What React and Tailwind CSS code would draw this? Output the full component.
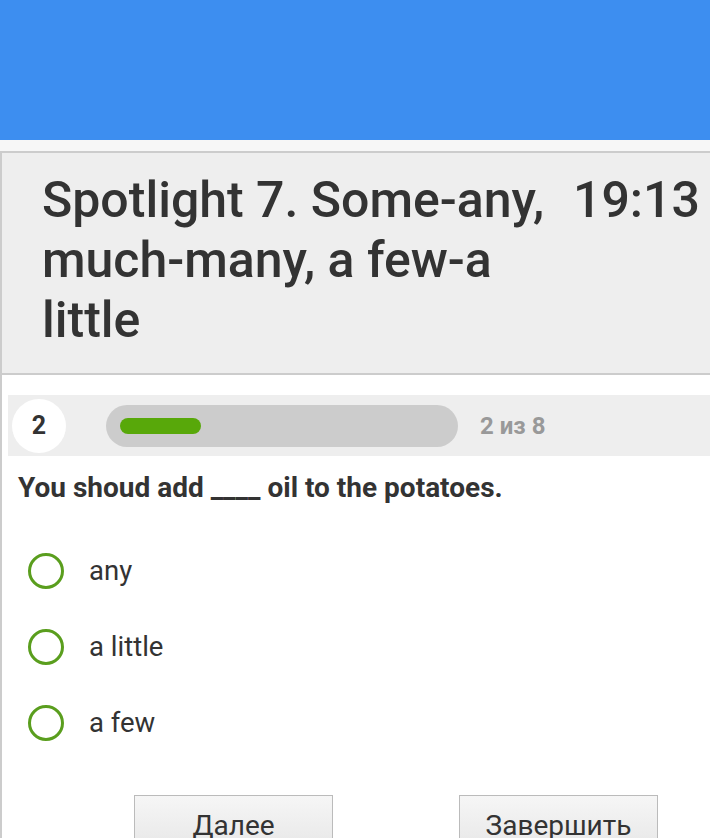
import React from "react";

const options = ["any", "a little", "a few"];

function App() {
  return (
    <div className="w-[710px] h-[838px] overflow-hidden bg-white font-['Roboto',sans-serif] text-[#333]">
      <div className="h-[140px] bg-[#3d8ef0]"></div>
      <div className="h-[11px] bg-[#f7f7f7]"></div>

      <div className="flex border-t-2 border-b-2 border-l-2 border-[#ccc] bg-[#eee] pl-[40px] pt-[17px] pb-[23px]">
        <h1 className="w-[525px] text-[50px] leading-[60px] font-medium">
          Spotlight 7. Some-any, much-many, a few-a little
        </h1>
        <div className="ml-[6px] text-[50px] leading-[60px] font-medium">19:13</div>
      </div>

      <div className="border-l-2 border-[#ccc] pt-[20px] pb-[40px]">
        <div className="ml-[6px] h-[61px] bg-[#eee] flex items-center">
          <div className="ml-[4px] w-[54px] h-[54px] rounded-full bg-white flex items-center justify-center text-[25px] font-bold">
            2
          </div>
          <div className="ml-[40px] w-[352px] h-[42px] rounded-full bg-[#ccc] flex items-center px-[14px]">
            <div className="w-[81px] h-[16px] rounded-full bg-[#58a80a]"></div>
          </div>
          <div className="ml-[22px] text-[24px] font-bold text-[#999]">2 из 8</div>
        </div>

        <p className="mt-[14px] ml-[16px] text-[28px] font-bold leading-[36px]">
          You shoud add ____ oil to the potatoes.
        </p>

        <div className="mt-[47px] ml-[26px] flex flex-col gap-[40px]">
          {options.map((opt) => (
            <label key={opt} className="flex items-center h-[36px]">
              <span className="w-[36px] h-[36px] rounded-full border-[3px] border-[#5a9e1e]"></span>
              <span className="ml-[25px] text-[27.5px]">{opt}</span>
            </label>
          ))}
        </div>

        <div className="mt-[54px] flex">
          <button className="ml-[132px] w-[199px] h-[60px] border border-[#bbb] bg-gradient-to-b from-[#f6f6f6] to-[#e6e6e6] text-[28px] pt-[2px]">
            Далее
          </button>
          <button className="ml-[126px] w-[199px] h-[60px] border border-[#bbb] bg-gradient-to-b from-[#f6f6f6] to-[#e6e6e6] text-[28px] pt-[2px]">
            Завершить
          </button>
        </div>
      </div>
    </div>
  );
}

export default App;
